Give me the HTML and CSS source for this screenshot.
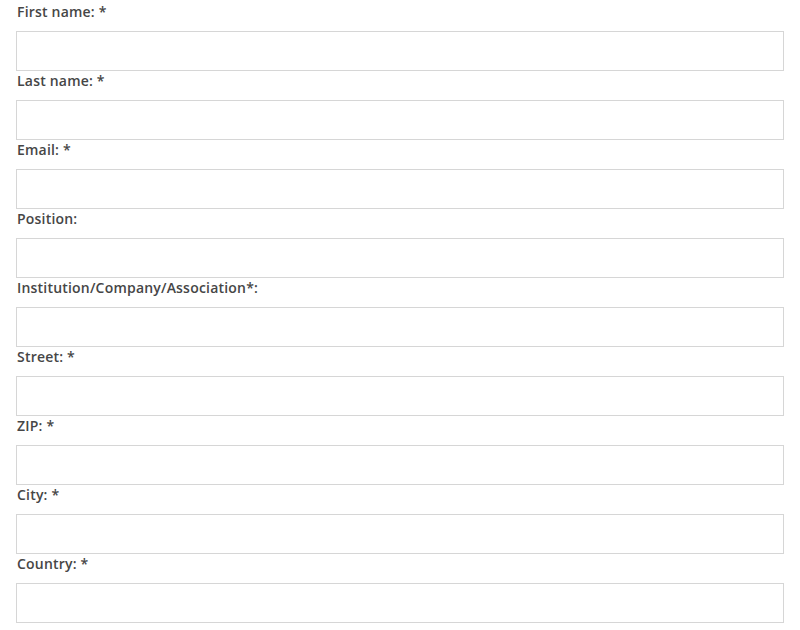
FILE: index.html
```html
<!DOCTYPE html>
<html>
<head>
<meta charset="utf-8">
<title>Registration</title>
<link rel="stylesheet" href="styles.css">
</head>
<body>
<form class="form">
  <label class="label">First name: *</label>
  <input class="field" type="text">
  <label class="label">Last name: *</label>
  <input class="field" type="text">
  <label class="label">Email: *</label>
  <input class="field" type="text">
  <label class="label">Position:</label>
  <input class="field" type="text">
  <label class="label">Institution/Company/Association*:</label>
  <input class="field" type="text">
  <label class="label">Street: *</label>
  <input class="field" type="text">
  <label class="label">ZIP: *</label>
  <input class="field" type="text">
  <label class="label">City: *</label>
  <input class="field" type="text">
  <label class="label">Country: *</label>
  <input class="field" type="text">
</form>
</body>
</html>
```

FILE: styles.css
```css
body{margin:0;background:#fff;color:#464646;font-family:"Open Sans",Lato,sans-serif;}
.form{display:flex;flex-direction:column;padding:2px 17px 0 16px;}
.label{display:block;font-size:14px;font-weight:600;line-height:20px;letter-spacing:0.2px;margin-bottom:9px;padding-left:1px;}
.field{display:block;box-sizing:border-box;width:768px;height:40px;margin:0;border:1px solid #d6d6d6;background:#fff;padding:0 10px;font-size:14px;}
```
